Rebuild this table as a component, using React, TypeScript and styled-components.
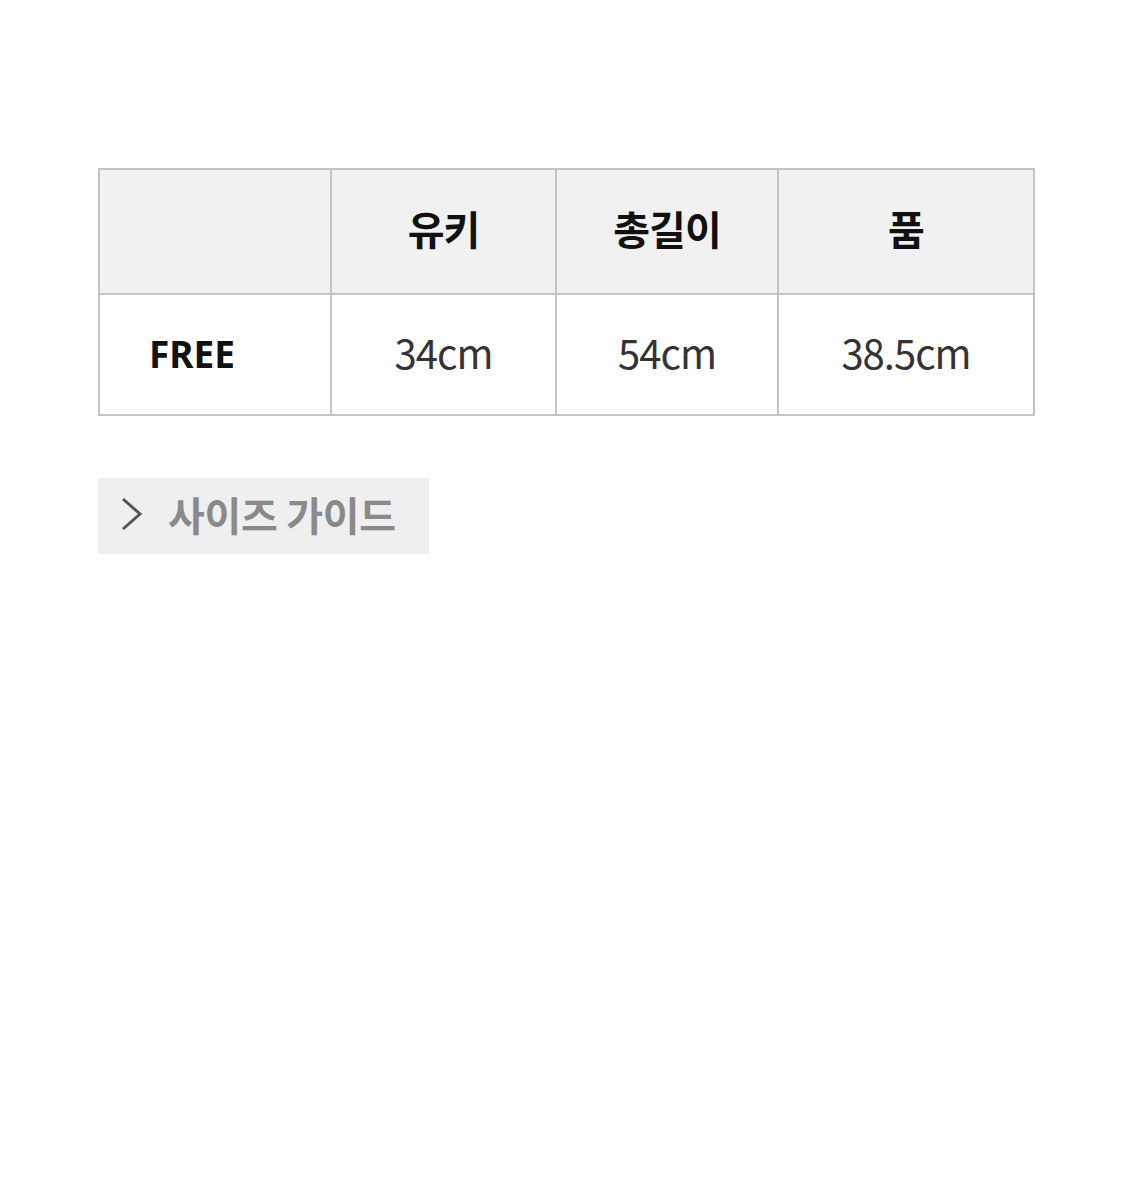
import React from "react";
import styled, { createGlobalStyle } from "styled-components";

const Global = createGlobalStyle`
  html, body { margin: 0; padding: 0; background: #fff; }
  body { font-family: "Noto Sans CJK KR", "Noto Sans", sans-serif; }
`;

const Page = styled.div`
  width: 1125px;
  height: 1186px;
  padding: 168px 0 0 98px;
  box-sizing: border-box;
  display: flex;
  flex-direction: column;
  gap: 62px;
`;

const Table = styled.table`
  border-collapse: collapse;
  width: 935px;
  table-layout: fixed;
  border: 2px solid #c4c4c4;
`;

const HeadCell = styled.th`
  height: 115px;
  background: #f1f1f1;
  border: 2px solid #c4c4c4;
  font-size: 40px;
  font-weight: 700;
  color: #111;
  text-align: center;
  padding: 0 0 8px;
  letter-spacing: -1px;
`;

const Cell = styled.td<{ $label?: boolean }>`
  height: 114px;
  border: 2px solid #c4c4c4;
  font-size: ${(p) => (p.$label ? "37px" : "40px")};
  font-weight: ${(p) => (p.$label ? 700 : 400)};
  color: ${(p) => (p.$label ? "#111" : "#333")};
  text-align: ${(p) => (p.$label ? "left" : "center")};
  padding: ${(p) => (p.$label ? "0 0 3px 49px" : "0 0 5px")};
  letter-spacing: ${(p) => (p.$label ? "0" : "-1px")};
  font-family: ${(p) =>
    p.$label ? `"Noto Sans", sans-serif` : `"Noto Sans CJK KR", sans-serif`};
`;

const GuideButton = styled.button`
  align-self: flex-start;
  display: flex;
  align-items: center;
  gap: 24px;
  width: 331px;
  height: 76px;
  padding: 0 0 4px 22px;
  margin: 0;
  border: none;
  background: #efefef;
  font-family: "Noto Sans CJK KR", sans-serif;
  font-size: 40px;
  font-weight: 700;
  color: #8a8a8a;
  letter-spacing: -0.3px;
  cursor: pointer;
`;

const Chevron = () => (
  <svg width="24" height="36" viewBox="0 0 24 36">
    <path d="M3 3 L20 18 L3 33" fill="none" stroke="#555" strokeWidth="3" />
  </svg>
);

export default function App() {
  const heads = ["", "유키", "총길이", "품"];
  const values = ["34cm", "54cm", "38.5cm"];
  const widths = [232, 225, 222, 256];
  return (
    <>
      <Global />
      <Page>
        <Table>
          <colgroup>
            {widths.map((w, i) => (
              <col key={i} style={{ width: w }} />
            ))}
          </colgroup>
          <thead>
            <tr>
              {heads.map((h, i) => (
                <HeadCell key={i}>{h}</HeadCell>
              ))}
            </tr>
          </thead>
          <tbody>
            <tr>
              <Cell $label>FREE</Cell>
              {values.map((v) => (
                <Cell key={v}>{v}</Cell>
              ))}
            </tr>
          </tbody>
        </Table>
        <GuideButton>
          <Chevron />
          사이즈 가이드
        </GuideButton>
      </Page>
    </>
  );
}
